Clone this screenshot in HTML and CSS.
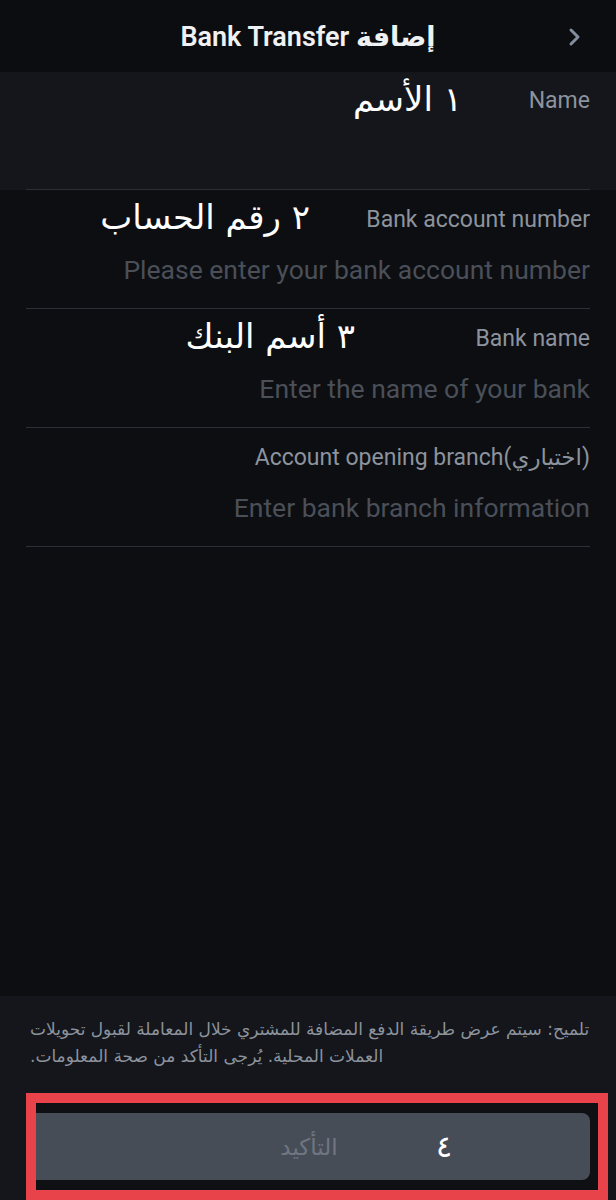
FILE: index.html
```html
<!DOCTYPE html>
<html lang="ar">
<head>
    <meta charset="UTF-8">
    <meta name="viewport" content="width=device-width, initial-scale=1.0">
    <title>Bank Transfer</title>
    <link rel="stylesheet" href="styles.css">
</head>
<body>
    <header class="topbar">
        <span></span>
        <h1 class="title" dir="ltr">Bank Transfer إضافة</h1>
        <span class="back">
            <svg width="16" height="20" viewBox="0 0 16 20">
                <path d="M4 3 L11 10 L4 17" fill="none" stroke="#848e9c" stroke-width="3" stroke-linecap="round" stroke-linejoin="round"/>
            </svg>
        </span>
    </header>

    <main class="form" dir="ltr">
        <div class="name-section">
            <div class="field field-name">
                <div class="label">Name</div>
                <span class="note note-1" dir="rtl">١ الأسم</span>
            </div>
        </div>

        <div class="fields">
            <div class="field">
                <div class="label">Bank account number</div>
                <div class="placeholder">Please enter your bank account number</div>
                <span class="note note-2" dir="rtl">٢ رقم الحساب</span>
            </div>
            <div class="field">
                <div class="label">Bank name</div>
                <div class="placeholder">Enter the name of your bank</div>
                <span class="note note-3" dir="rtl">٣ أسم البنك</span>
            </div>
            <div class="field">
                <div class="label">Account opening branch(اختياري)</div>
                <div class="placeholder">Enter bank branch information</div>
            </div>
        </div>
    </main>

    <footer class="footer">
        <p class="tip" dir="rtl">تلميح: سيتم عرض طريقة الدفع المضافة للمشتري خلال المعاملة لقبول تحويلات العملات المحلية. يُرجى التأكد من صحة المعلومات.</p>
        <div class="highlight">
            <button class="confirm" type="button">التأكيد</button>
            <span class="note note-4">٤</span>
        </div>
    </footer>
</body>
</html>
```

FILE: styles.css
```css
* {
    box-sizing: border-box;
}
body {
    margin: 0;
    height: 1200px;
    display: flex;
    flex-direction: column;
    background-color: #0c0e12;
    font-family: Roboto, "DejaVu Sans", sans-serif;
    color: #eaecef;
    overflow: hidden;
}
.topbar {
    height: 72px;
    flex: 0 0 auto;
    display: grid;
    grid-template-columns: 1fr auto 1fr;
    align-items: center;
    background-color: #0b0d11;
}
.title {
    margin: 0;
    font-size: 27px;
    font-weight: 600;
    color: #f0f1f3;
    padding-top: 2px;
}
.back {
    justify-self: end;
    display: flex;
    padding-right: 33px;
    padding-top: 2px;
}
.form {
    flex: 1;
}
.name-section {
    background-color: #14161b;
    padding: 0 26px;
}
.fields {
    padding: 0 26px;
}
.field {
    position: relative;
    height: 119px;
    border-bottom: 1px solid #2b2f36;
    padding-top: 15px;
    text-align: right;
}
.field-name {
    height: 118px;
    padding-top: 14px;
}
.label {
    font-size: 23px;
    line-height: 30px;
    color: #8c939d;
}
.placeholder {
    margin-top: 19px;
    font-size: 26.5px;
    line-height: 32px;
    color: #4a4f58;
}
.note {
    position: absolute;
    font-family: "DejaVu Sans", sans-serif;
    font-size: 34px;
    line-height: 40px;
    color: #ffffff;
    white-space: nowrap;
}
.note-1 {
    top: 7px;
    right: 128px;
}
.note-2 {
    top: 7px;
    right: 280px;
}
.note-3 {
    top: 7px;
    right: 235px;
}
.footer {
    flex: 0 0 198px;
    background-color: #14161b;
    padding: 20px 0 0;
}
.tip {
    margin: 0 26px 0 30px;
    font-family: "DejaVu Sans", sans-serif;
    font-size: 17px;
    line-height: 27px;
    color: #8c939d;
    text-align: left;
}
.highlight {
    position: relative;
    margin: 23px 8px 0 26px;
    height: 107px;
    border: 10px solid #e8434b;
    background-color: #0e1014;
    padding: 10px 8px 10px 0;
}
.confirm {
    display: block;
    width: 100%;
    height: 67px;
    border: none;
    border-radius: 0 8px 8px 0;
    background-color: #474d57;
    color: #6f7682;
    font-family: "DejaVu Sans", sans-serif;
    font-size: 23px;
    padding: 0 8px 0 0;
}
.note-4 {
    top: 24px;
    left: 400px;
    font-size: 30px;
}
```
